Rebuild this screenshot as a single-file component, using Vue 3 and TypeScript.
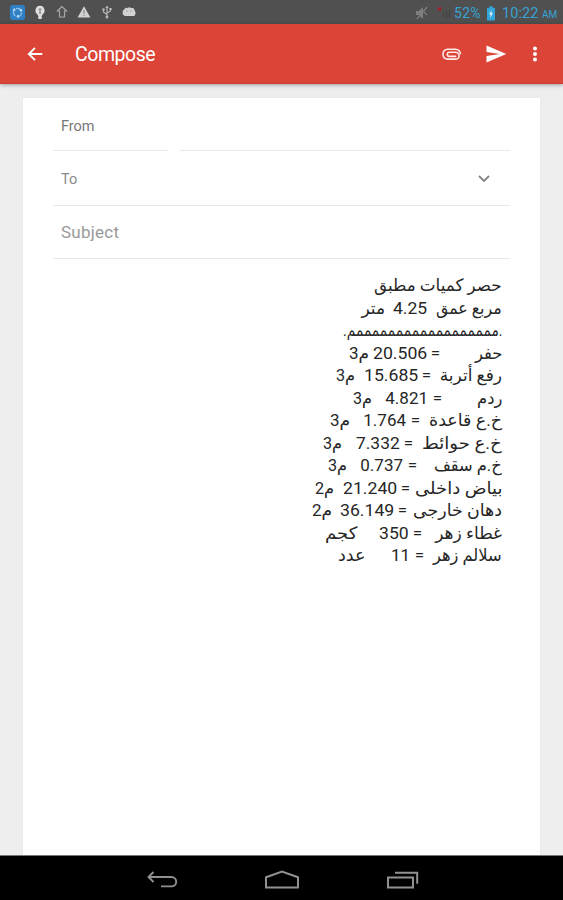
<script setup lang="ts">
import { onMounted, ref } from 'vue'

interface Segment { text: string; left: number; right: number }

const EDGE = 502
const seg = (text: string, left: number, right: number): Segment => ({ text, left, right })
const measure = (label: string, labelLeft: number, eqLeft: number, value: string, valueLeft: number, valueRight: number, unit: string, unitLeft: number, unitRight: number): Segment[] => [
  seg(label, labelLeft, EDGE),
  seg('=', eqLeft, eqLeft + 9),
  seg(value, valueLeft, valueRight),
  seg(unit, unitLeft, unitRight),
]

const lines: Segment[][] = [
  [seg('حصر كميات مطبق', 374, EDGE)],
  [seg('مربع عمق', 436, EDGE), seg('4.25', 393, 427), seg('متر', 361, 385)],
  [seg('.ممممممممممممممممممم.', 343, EDGE)],
  measure('حفر', 474, 431, '20.506', 373, 427, 'م3', 349, 369),
  measure('رفع أتربة', 440, 422, '15.685', 364, 418, 'م3', 336, 355),
  measure('ردم', 477, 433, '4.821', 385, 428, 'م3', 353, 372),
  measure('خ.ع قاعدة', 429, 411, '1.764', 363, 406, 'م3', 330, 350),
  measure('خ.ع حوائط', 422, 404, '7.332', 356, 400, 'م3', 323, 342),
  measure('خ.م سقف', 434, 408, '0.737', 360, 403, 'م3', 328, 347),
  measure('بياض داخلى', 415, 401, '21.240', 343, 397, 'م2', 315, 334),
  measure('دهان خارجى', 413, 398, '36.149', 340, 394, 'م2', 312, 332),
  measure('غطاء زهر', 435, 413, '350', 379, 409, 'كجم', 325, 357),
  measure('سلالم زهر', 433, 415, '11', 391, 410, 'عدد', 338, 366),
]

const gapBefore = (line: Segment[], i: number) => (i === 0 ? EDGE : line[i - 1].left) - line[i].right

const message = ref<HTMLElement | null>(null)

// Condense each run to the width of its slot.
onMounted(() => {
  message.value?.querySelectorAll<HTMLElement>('.run').forEach((run) => {
    const slot = run.parentElement as HTMLElement
    run.style.transform = `scaleX(${slot.clientWidth / run.offsetWidth})`
  })
})
</script>

<template>
  <div class="screen">
    <div class="status">
      <div class="notifications">
        <svg width="15" height="15" viewBox="0 0 14 14"><rect width="14" height="14" rx="2" fill="#2f7fc4" /><circle cx="7" cy="7" r="3.8" fill="none" stroke="#8fc3ea" stroke-width="1.2" stroke-dasharray="6 2" /><circle cx="4" cy="4.4" r="1.2" fill="#b9dcf5" /><circle cx="10.2" cy="5" r="1.2" fill="#b9dcf5" /><circle cx="7.5" cy="10.6" r="1.2" fill="#b9dcf5" /></svg>
        <svg width="12" height="15" viewBox="0 0 12 15"><path d="M6 .8a4.7 4.7 0 0 0-3 8.2l1.3 2V14h3.4v-3L9 9A4.7 4.7 0 0 0 6 .8z" fill="#dedede" /><path d="M6 9V5M4.7 4.2h2.6" stroke="#777" stroke-width="1.2" /></svg>
        <svg width="12" height="14" viewBox="0 0 12 14"><path d="M6 1.5L1.5 6H3.5v6h5V6h2z" fill="none" stroke="#a8a8a8" stroke-width="1.2" /></svg>
        <svg width="14" height="14" viewBox="0 0 14 14"><path d="M7 1.2L13.4 12.5H.6z" fill="#d2d2d2" /><path d="M7 5v3.8M7 9.8v1.3" stroke="#888" stroke-width="1.2" /></svg>
        <svg width="12" height="14" viewBox="0 0 12 14"><path d="M6 12V2M6 9.5L2.5 7V4.5M6 8l3.5-2V3.5" fill="none" stroke="#b5b5b5" stroke-width="1.2" /><path d="M6 .5l1.8 2.5H4.2zM8.3 3h2.4v2H8.3z" fill="#b5b5b5" /><circle cx="2.5" cy="4.5" r="1.3" fill="#b5b5b5" /><circle cx="6" cy="12" r="1.5" fill="#b5b5b5" /></svg>
        <svg width="14" height="14" viewBox="0 0 14 14"><path d="M3 3.5l1.2-1 1 .8 2-1 2.3.8 1.8 0 1.2 2L13.7 8l-1.2 3H3L.8 9.5.7 6z" fill="#d2d2d2" /><path d="M4 6h1.6M8 6h1.6" stroke="#999" /></svg>
      </div>
      <div class="system">
        <svg class="mute" width="13" height="14" viewBox="0 0 13 14"><path d="M1 5h3l4-4v12L4 9H1z" fill="#7f7f7f" /><path d="M2 13L12 1M9 6l3 3" stroke="#7f7f7f" stroke-width="1.2" /></svg>
        <svg class="signal" width="15" height="14" viewBox="0 0 15 14"><path d="M1 1.5l3 3M4 1.5l-3 3" stroke="#a51d27" stroke-width="1.5" /><path d="M6.5 12V7M9.5 12V5M12.5 12V4" stroke="#444" stroke-width="1.5" /></svg>
        <span class="percent">52%</span>
        <svg class="battery" width="10" height="15" viewBox="0 0 10 15"><path d="M3 .5h4V2h2v12.5H1V2h2z" fill="#33a5d8" /><path d="M5.6 4L3 8.3h1.7L4 12l3-4.7H5.3z" fill="#e7f8ff" /></svg>
        <span class="clock">10:22</span><span class="ampm">AM</span>
      </div>
    </div>

    <header class="toolbar">
      <svg class="back" width="18" height="18" viewBox="0 0 18 18"><path d="M16.3 9H3M9 2.8L2.8 9 9 15.2" fill="none" stroke="#fff" stroke-width="1.9" /></svg>
      <h1>Compose</h1>
      <svg class="attach" width="21" height="14" viewBox="0 0 21 14"><path d="M15.2 9.4H8.4a2.1 2.1 0 0 1 0-4.2H14.6a3.1 3.1 0 0 1 0 6.9H6.3a5 5 0 0 1 0-9.9H14.5a5 5 0 0 1 5 5" fill="none" stroke="#ffe9e6" stroke-width="1.6" /></svg>
      <svg class="send" width="21" height="18" viewBox="0 0 21 18"><path d="M.5.5L20.3 9 .5 17.5V11L14 9 .5 7z" fill="#fff" /></svg>
      <svg class="more" width="6" height="18" viewBox="0 0 6 18"><g fill="#fff"><circle cx="3" cy="3.4" r="2" /><circle cx="3" cy="9" r="2" /><circle cx="3" cy="14.6" r="2" /></g></svg>
    </header>

    <main class="content">
      <section class="sheet">
        <div class="field from"><span class="from-label">From</span><span class="from-value"></span></div>
        <div class="field to"><span>To</span><svg width="14" height="10" viewBox="0 0 14 10"><path d="M2 2l5 5 5-5" fill="none" stroke="#858585" stroke-width="1.8" /></svg></div>
        <div class="field subject"><span>Subject</span></div>
        <div ref="message" class="message" dir="rtl">
          <div v-for="(line, n) in lines" :key="n" class="line">
            <span v-for="(s, i) in line" :key="i" class="slot" :style="{ width: s.right - s.left + 'px', marginRight: gapBefore(line, i) + 'px' }"><span class="run">{{ s.text }}</span></span>
          </div>
        </div>
      </section>
    </main>

    <nav class="navbar">
      <svg width="34" height="22" viewBox="0 0 34 22"><path d="M8.5 2L3.5 7l5 5M4 7h22.5a4.7 4.7 0 0 1 0 9.4H16" fill="none" stroke="#919191" stroke-width="1.9" /></svg>
      <svg width="38" height="22" viewBox="0 0 38 22"><path d="M3 17.5V7.3L19 1.5l16 5.8v10.2z" fill="none" stroke="#919191" stroke-width="2" /></svg>
      <svg width="36" height="22" viewBox="0 0 36 22"><path d="M3 7.5h25v10H3zM10 2.7h22.2v11" fill="none" stroke="#919191" stroke-width="2" /></svg>
    </nav>
  </div>
</template>

<style>
body { margin: 0; }
</style>

<style scoped>
.screen { width: 563px; height: 900px; display: flex; flex-direction: column; overflow: hidden; background: #eee; font-family: Roboto, "DejaVu Sans", sans-serif; }
svg { display: block; flex: none; }
.status { height: 24px; flex: none; box-sizing: border-box; padding: 0 5px 0 10px; background: #505050; display: flex; justify-content: space-between; align-items: center; }
.notifications { display: flex; align-items: center; gap: 9.5px; margin-left: -.5px; }
.system { display: flex; align-items: center; color: #35a3d5; white-space: nowrap; line-height: 24px; padding-top: 2px; }
.mute { margin-right: 9px; margin-left: -3px; }
.signal { margin-right: 2px; }
.percent { font-size: 14px; width: 29px; letter-spacing: .3px; }
.battery { margin: 0 6px 0 3px; }
.clock { font-size: 14.5px; width: 37px; letter-spacing: .1px; padding-top: 1px; }
.ampm { font-size: 10px; width: 16px; margin-left: 3px; padding-top: 3px; }
.toolbar { height: 60px; flex: none; box-sizing: border-box; background: #db4437; color: #fff; display: flex; align-items: center; padding: 0 25px; border-bottom: 1px solid #c93d32; box-shadow: 0 1px 4px rgba(0,0,0,.35); position: relative; }
.back { margin: 0 -1px 0 1px; }
.toolbar h1 { margin: 3px auto 0 32px; font-size: 19.5px; font-weight: 400; line-height: 24px; letter-spacing: -.45px; }
.send { margin-left: 24px; }
.more { margin-left: 25px; }
.content { flex: 1; min-height: 0; padding: 14px 23px 0; display: flex; }
.sheet { flex: 1; background: #fff; box-sizing: border-box; padding: 0 30px; box-shadow: 0 0 1px #ddd; }
.field { box-sizing: border-box; display: flex; align-items: center; border-bottom: 1px solid #e8e8e8; padding: 0 19px 0 8px; color: #8a8a8a; font-size: 14.5px; }
.from { height: 53px; padding: 0; border: 0; gap: 12px; align-items: stretch; }
.from-label, .from-value { border-bottom: 1px solid #e8e8e8; }
.from-label { width: 107px; padding-left: 8px; line-height: 57px; color: #777; height: 52px; }
.from-value { flex: 1; }
.to { height: 55px; justify-content: space-between; }
.to span { padding-top: 2px; }
.to svg { margin-top: 1px; }
.subject { height: 53px; color: #999; font-size: 17px; letter-spacing: .25px; }
.message { padding: 15px 8px 0 0; }
.line { height: 22.5px; display: flex; color: #262626; font-size: 17px; line-height: 22.5px; }
.slot { flex: none; display: block; white-space: nowrap; }
.run { display: inline-block; transform-origin: right center; height: 22.5px; }
.navbar { height: 45px; flex: none; box-sizing: border-box; background: #000; border-top: 1px solid #777; display: flex; justify-content: center; align-items: center; gap: 84px; padding: 5px 0 0 2px; }
</style>
